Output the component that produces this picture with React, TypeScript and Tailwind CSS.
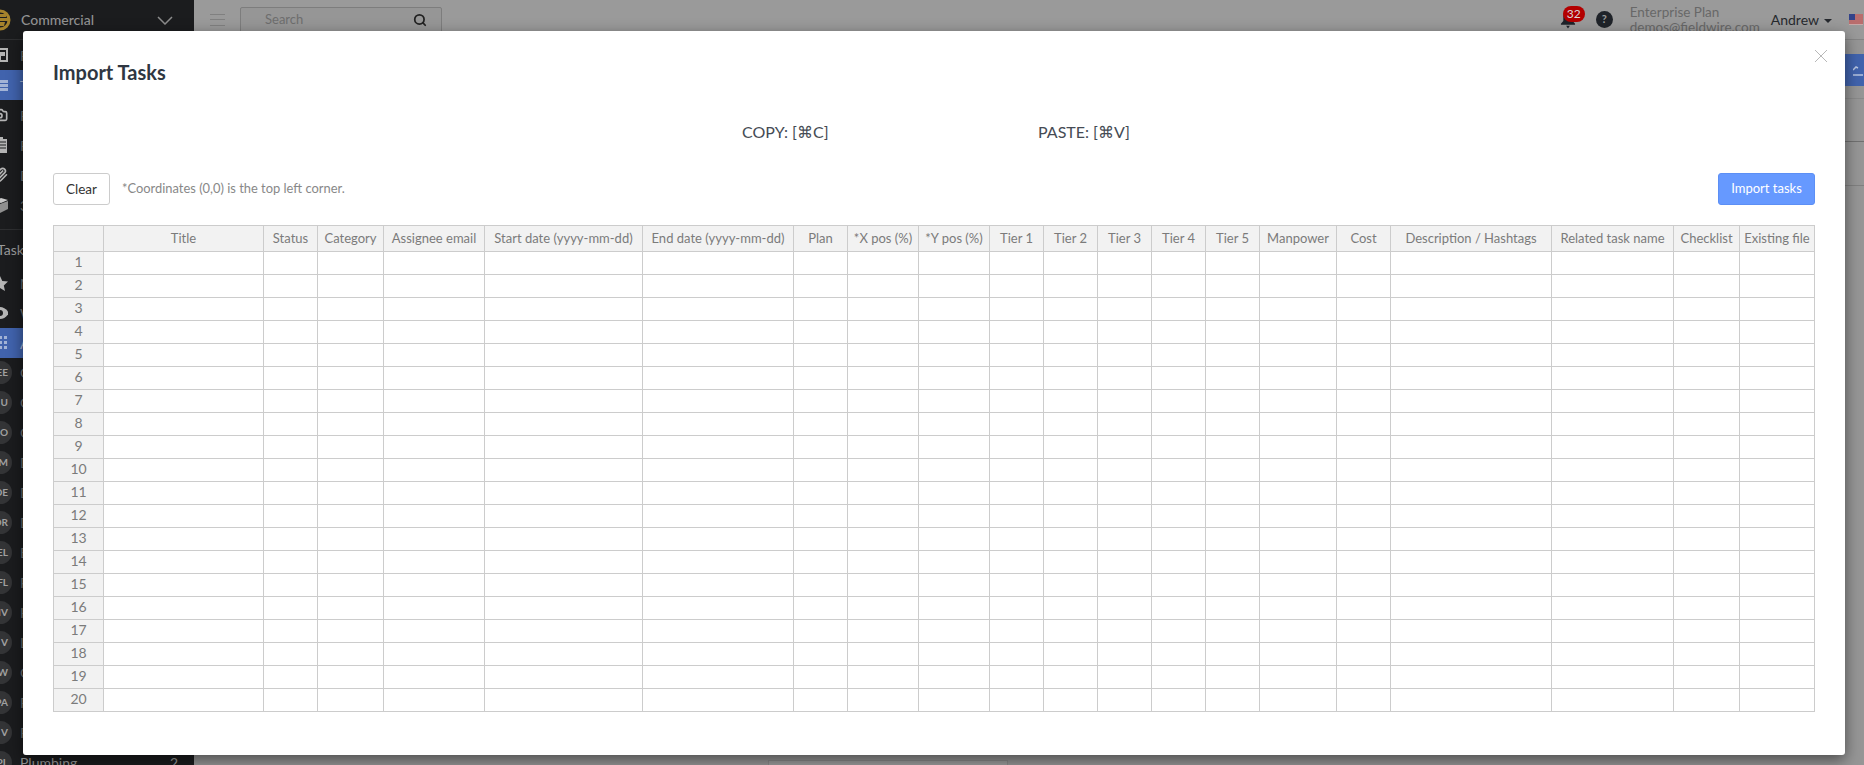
import type { ReactNode } from "react";
import { Search, Camera, Paperclip } from "lucide-react";

const columns = [
  { label: "", width: "w-[51px]" },
  { label: "Title", width: "w-[160px]" },
  { label: "Status", width: "w-[54px]" },
  { label: "Category", width: "w-[66px]" },
  { label: "Assignee email", width: "w-[101px]" },
  { label: "Start date (yyyy-mm-dd)", width: "w-[158px]" },
  { label: "End date (yyyy-mm-dd)", width: "w-[151px]" },
  { label: "Plan", width: "w-[54px]" },
  { label: "*X pos (%)", width: "w-[71px]" },
  { label: "*Y pos (%)", width: "w-[71px]" },
  { label: "Tier 1", width: "w-[54px]" },
  { label: "Tier 2", width: "w-[54px]" },
  { label: "Tier 3", width: "w-[54px]" },
  { label: "Tier 4", width: "w-[54px]" },
  { label: "Tier 5", width: "w-[54px]" },
  { label: "Manpower", width: "w-[77px]" },
  { label: "Cost", width: "w-[54px]" },
  { label: "Description / Hashtags", width: "w-[161px]" },
  { label: "Related task name", width: "w-[122px]" },
  { label: "Checklist", width: "w-[66px]" },
  { label: "Existing file", width: "w-[75px]" },
];

const rows = Array.from({ length: 20 }, (_, i) => i + 1);
const trades = [
  ["EE", "Concrete"],
  ["U", "Conduit"],
  ["O", "Controls"],
  ["M", "Demolition"],
  ["DE", "Design"],
  ["DR", "Drywall"],
  ["EL", "Electrical"],
  ["FL", "Flooring"],
  ["IV", "HVAC"],
  ["V", "Low voltage"],
  ["W", "Curtain wall"],
  ["PA", "Painting"],
  ["V", "Paving"],
];

function NavRow({ icon, label, active }: { icon: ReactNode; label: string; active?: boolean }) {
  return (
    <div className={`flex h-[30px] shrink-0 items-center text-[#b4b4b4] ${active ? "bg-[#4163ad]" : ""}`}>
      <span className="flex w-[8px] shrink-0 justify-end overflow-hidden">{icon}</span>
      <span className={`ml-[12px] text-[14px] ${active ? "text-[#a9b7d6]" : "text-[#707070]"}`}>{label}</span>
    </div>
  );
}

function Sidebar() {
  return (
    <aside className="flex h-full w-[194px] shrink-0 flex-col overflow-hidden bg-[#1b1c1e]">
      <div className="flex h-[40px] shrink-0 items-center border-b border-[#2e2f31]">
        <svg width="11" height="24" viewBox="0 0 11 24" className="shrink-0">
          <circle cx="0" cy="12" r="9" fill="#1b1c1e" stroke="#a5822c" strokeWidth="3" />
          <path d="M0 6h6v3H0zM0 10h8v3H0zM0 14h5l-1 4H0z" fill="#a5822c" />
        </svg>
        <span className="ml-[10px] text-[14px] font-medium text-[#929292]">Commercial</span>
        <svg width="16" height="9" viewBox="0 0 16 9" className="ml-auto mr-[21px] mt-[2px]">
          <path d="M1 1l7 7 7-7" fill="none" stroke="#8c8c8c" strokeWidth="1.5" />
        </svg>
      </div>
      <NavRow
        label="Plans"
        icon={
          <svg width="16" height="14" viewBox="0 0 16 14" className="shrink-0">
            <path d="M1 1h14v12H1zM4 5h8v2H8v6" fill="none" stroke="#b4b4b4" strokeWidth="2" />
          </svg>
        }
      />
      <NavRow
        active
        label="Tasks"
        icon={
          <span className="flex h-[11px] w-[8px] shrink-0 flex-col justify-between">
            <span className="h-[3px] bg-[#a2b3d6]" />
            <span className="h-[3px] bg-[#a2b3d6]" />
            <span className="h-[3px] bg-[#a2b3d6]" />
          </span>
        }
      />
      <NavRow label="Photos" icon={<Camera className="size-[16px] shrink-0" strokeWidth={2.5} />} />
      <NavRow
        label="Reports"
        icon={
          <svg width="14" height="16" viewBox="0 0 14 16" className="shrink-0">
            <path d="M1 2h12v14H1z" fill="#b4b4b4" />
            <path d="M6 5h6M6 8h6M6 11h6" stroke="#1b1c1e" strokeWidth="1.2" />
            <path d="M5 0h4v3H5z" fill="#b4b4b4" />
          </svg>
        }
      />
      <NavRow label="Docs" icon={<Paperclip className="size-[16px] shrink-0" strokeWidth={2.5} />} />
      <NavRow
        label="3D"
        icon={
          <svg width="16" height="16" viewBox="0 0 16 16" className="shrink-0">
            <path d="M1 4l8-3 7 2-7 3z" fill="#c8c8c8" />
            <path d="M8 7l8-3v8l-8 4z" fill="#8f8f8f" />
          </svg>
        }
      />
      <div className="h-[10px] shrink-0 border-b border-[#2e2f31]" />
      <div className="mb-[4px] mt-[4px] flex h-[30px] shrink-0 items-center -ml-[3px] text-[14px] text-[#9a9a9a]">Tasks</div>
      <NavRow
        label="My tasks"
        icon={
          <svg width="16" height="15" viewBox="0 0 16 15" className="shrink-0">
            <path d="M8 0l2.300 5 5.700.600-4.200 3.800 1.200 5.600-5-2.900-5 2.900 1.200-5.600L0 5.600 5.700 5z" fill="#b4b4b4" />
          </svg>
        }
      />
      <NavRow
        label="Watched"
        icon={
          <svg width="18" height="12" viewBox="0 0 18 12" className="-mr-[1px] shrink-0">
            <path d="M0 6c2.500-4 5.500-6 9-6s6.500 2 9 6c-2.500 4-5.500 6-9 6S2.500 10 0 6z" fill="#b4b4b4" />
            <circle cx="9" cy="6" r="3" fill="#1b1c1e" />
          </svg>
        }
      />
      <NavRow
        active
        label="All tasks"
        icon={
          <svg width="14" height="14" viewBox="0 0 14 14" className="shrink-0">
            <path d="M0 0h3v3H0zM5 0h3v3H5zM10 0h3v3h-3zM0 5h3v3H0zM5 5h3v3H5zM10 5h3v3h-3zM0 10h3v3H0zM5 10h3v3H5zM10 10h3v3h-3z" fill="#a2b3d6" />
          </svg>
        }
      />
      {trades.map(([code, name], i) => (
        <div key={i} className="flex h-[30px] shrink-0 items-center pb-[2px]">
          <span className="-ml-[11px] flex size-[23px] shrink-0 items-center justify-end rounded-full bg-[#333436] pr-[4px] text-[10px] font-bold text-[#a0a0a0]">
            {code}
          </span>
          <span className="ml-[8px] text-[14px] text-[#707070]">{name}</span>
        </div>
      ))}
      <div className="flex h-[30px] shrink-0 items-center pb-[2px] pr-[16px]">
        <span className="-ml-[11px] flex size-[23px] shrink-0 items-center justify-end rounded-full bg-[#333436] pr-[4px] text-[10px] font-bold text-[#a0a0a0]">
          PL
        </span>
        <span className="ml-[8px] flex-1 text-[14px] text-[#9a9a9a]">Plumbing</span>
        <span className="text-[14px] text-[#9a9a9a]">2</span>
      </div>
    </aside>
  );
}

function Main() {
  return (
    <div className="flex min-w-0 flex-1 flex-col bg-[#969696]">
      <header className="flex h-[40px] shrink-0 items-center border-b border-[#858585] bg-[#9a9a9a] pl-[16px]">
        <span className="flex h-[12px] w-[15px] flex-col justify-between">
          <span className="h-px bg-[#808080]" />
          <span className="h-px bg-[#808080]" />
          <span className="h-px bg-[#808080]" />
        </span>
        <div className="ml-[15px] mt-[7px] flex h-[26px] w-[202px] items-center justify-between self-start rounded-[2px] border border-[#7d7d7d] bg-[#969696] pl-[24px] pr-[14px]">
          <span className="text-[13px] text-[#6e6e6e]">Search</span>
          <Search className="size-[14px] text-[#222]" strokeWidth={3} />
        </div>
        <div className="ml-auto flex h-full items-center pr-[1px]">
          <span className="relative mr-[18px] mt-[6px] flex h-[23px] w-[18px] items-end self-start">
            <svg width="16" height="18" viewBox="0 0 17 18">
              <path d="M8.500 0c-3 0-5 2.500-5 5.500V10L1 13v1h15v-1l-2.500-3V5.500C13.500 2.500 11.500 0 8.500 0zM6.500 15h4l-2 3z" fill="#1e2229" />
            </svg>
            <span className="absolute left-[3px] top-0 flex h-[16px] w-[22px] items-center justify-center rounded-full bg-[#b30000] text-[12px] text-[#d8d8d8]">
              32
            </span>
          </span>
          <span className="mr-[17px] flex size-[17px] items-center justify-center rounded-full bg-[#1f2329] text-[11px] font-bold text-[#9a9a9a]">?</span>
          <div className="w-[141px] text-[13.500px] leading-[15px] text-[#686868]">
            <div>Enterprise Plan</div>
            <div>demos@fieldwire.com</div>
          </div>
          <span className="mr-[17px] flex items-center text-[14px] text-[#26292e]">
            Andrew
            <span className="ml-[5px] mt-[2px] border-x-[4px] border-t-[4px] border-x-transparent border-t-[#26292e]" />
          </span>
          <svg width="14" height="11" viewBox="0 0 14 11">
            <rect width="14" height="11" fill="#c9a7a7" />
            <path d="M0 1h14M0 3h14M0 5h14M0 7h14M0 9h14" stroke="#aa3535" strokeWidth="1" />
            <rect width="6" height="6" fill="#33438a" />
          </svg>
        </div>
      </header>
      <div className="h-[14px] shrink-0" />
      <div className="flex h-[32px] shrink-0 items-center justify-end bg-[#4163ad] pr-[1px]">
        <svg width="10" height="12" viewBox="0 0 10 12">
          <path d="M0 6l3-3 2 1M0 11h10" fill="none" stroke="#b8c5e0" strokeWidth="1.500" />
        </svg>
      </div>
      <div className="h-[13px] shrink-0 border-b border-[#8a8a8a]" />
      <div className="h-[43px] shrink-0 border-b border-[#707070]" />
      <div className="h-[44px] shrink-0 border-b border-[#808080]" />
      <div className="mt-auto ml-[574px] h-[5px] w-[240px] border border-b-0 border-[#8a8a8a] bg-[#9c9c9c]" />
    </div>
  );
}

export default function App() {
  return (
    <div className="relative h-[765px] w-[1864px] overflow-hidden font-['Lato','Noto_Sans',sans-serif]">
      <div className="flex h-[765px] w-[1864px] overflow-hidden">
        <Sidebar />
        <Main />
      </div>
      <div className="absolute left-[23px] top-[31px] flex h-[724px] w-[1822px] flex-col rounded-[3px] bg-white px-[30px] shadow-[0_5px_15px_rgba(0,0,0,0.5)]">
        <button className="absolute right-[17px] top-[18px]" aria-label="Close">
          <svg width="14" height="14" viewBox="0 0 14 14" className="block">
            <path d="M1 1l12 12M13 1L1 13" stroke="#b8b8b8" strokeWidth="1" fill="none" />
          </svg>
        </button>
        <h2 className="mt-[27px] text-[20px] leading-[28px] font-bold text-[#2f3742]">Import Tasks</h2>
        <div className="mt-[34px] flex h-[24px] items-center text-[16px] text-[#454b54]">
          <span className="ml-[689px] w-[296px]">COPY: [⌘C]</span>
          <span>PASTE: [⌘V]</span>
        </div>
        <div className="mt-[29px] flex items-center">
          <button className="h-[32px] w-[57px] rounded-[3px] border border-[#cccccc] bg-white text-[13.500px] text-[#333]">Clear</button>
          <span className="ml-[12px] text-[12.900px] text-[#888888]">*Coordinates (0,0) is the top left corner.</span>
          <button className="ml-auto h-[32px] w-[97px] rounded-[3px] border border-[#5c8ff5] bg-[#6699ff] text-[13px] text-white">Import tasks</button>
        </div>
        <table className="mt-[20px] w-[1762px] table-fixed border-separate border-spacing-0 text-[13px] text-[#7b7b7b]">
          <thead>
            <tr>
              {columns.map((c, i) => (
                <th
                  key={i}
                  className={`${c.width} ${i === 0 ? "border-l" : ""} h-[27px] overflow-hidden whitespace-nowrap border-y border-r border-[#cccccc] bg-[#f2f2f2] p-0 text-center font-normal`}
                >
                  {c.label}
                </th>
              ))}
            </tr>
          </thead>
          <tbody>
            {rows.map((r) => (
              <tr key={r}>
                {columns.map((_, i) =>
                  i === 0 ? (
                    <td key={i} className="h-[23px] border-b border-l border-r border-[#cccccc] bg-[#f2f2f2] p-0 pb-[2px] text-center text-[14px] leading-[20px]">
                      {r}
                    </td>
                  ) : (
                    <td key={i} className="h-[23px] border-b border-r border-[#cccccc] bg-white p-0" />
                  ),
                )}
              </tr>
            ))}
          </tbody>
        </table>
      </div>
    </div>
  );
}
